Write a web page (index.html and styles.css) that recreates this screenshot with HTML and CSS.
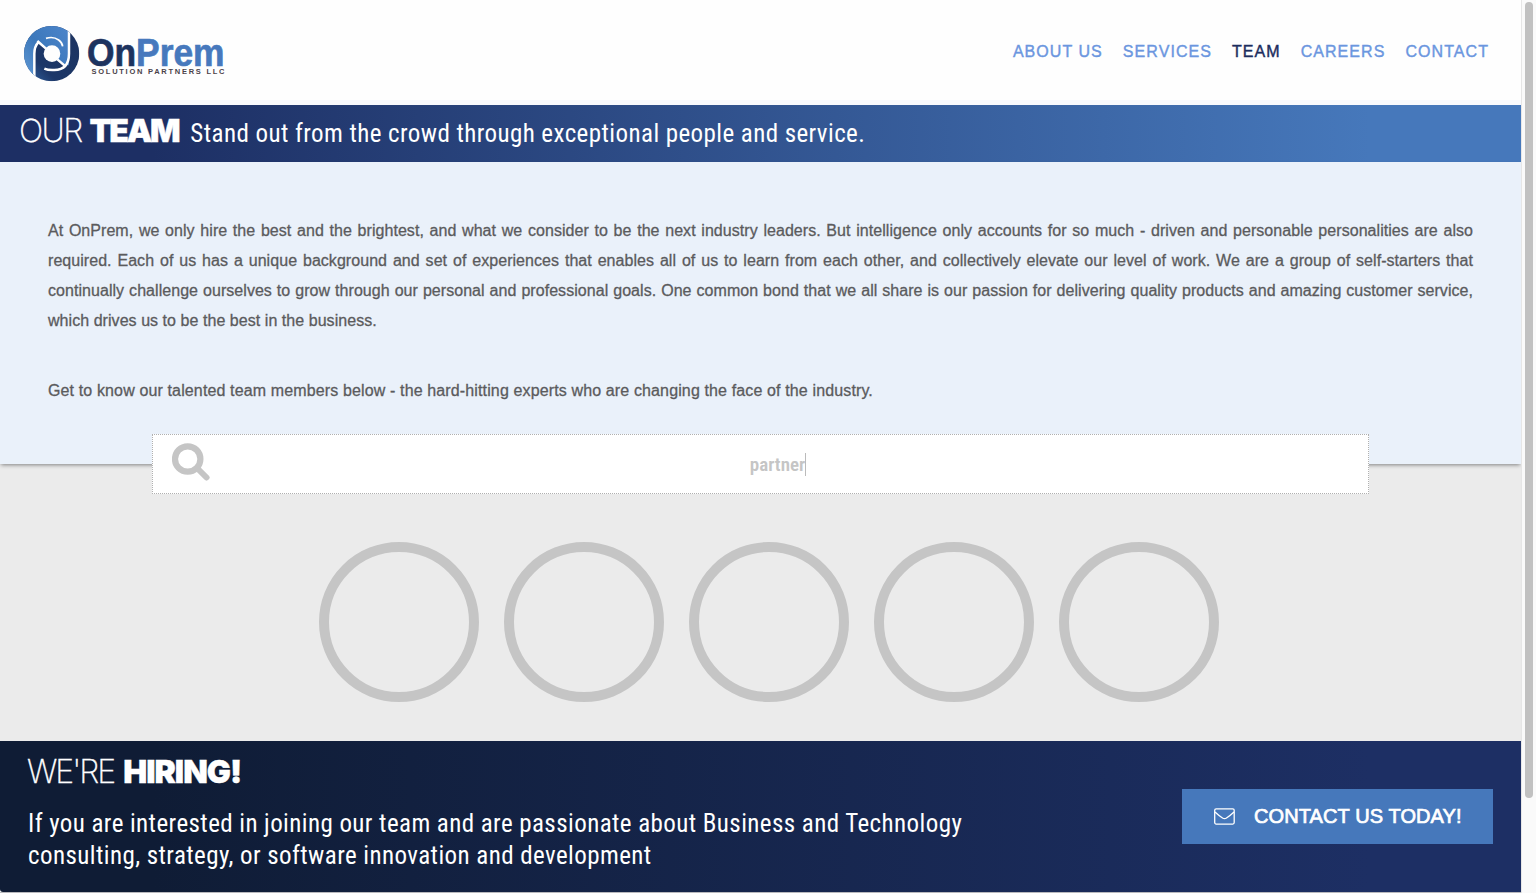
FILE: index.html
```html
<!DOCTYPE html>
<html lang="en">
<head>
<meta charset="utf-8">
<title>OnPrem Solution Partners - Team</title>
<link rel="stylesheet" href="styles.css">
</head>
<body>
<div class="window">
<div class="page">
  <header class="header">
    <svg class="logo" width="220" height="68" viewBox="0 0 220 68" role="img" aria-label="OnPrem Solution Partners LLC">
      <defs>
        <linearGradient id="light" x1="0" y1="1" x2="1" y2="0"><stop offset="0" stop-color="#6ba3dc"/><stop offset=".5" stop-color="#3c78bb"/><stop offset="1" stop-color="#4e86cc"/></linearGradient>
        <linearGradient id="dark" x1="0" y1="1" x2="1" y2="0"><stop offset="0" stop-color="#3467a6"/><stop offset=".3" stop-color="#1c3768"/><stop offset="1" stop-color="#1d335f"/></linearGradient>
        <clipPath id="disc"><circle cx="95" cy="95" r="83"/></clipPath>
      </defs>
      <g transform="scale(.3333)">
        <g clip-path="url(#disc)">
          <rect x="12" y="12" width="166" height="166" fill="url(#dark)"/>
          <path fill="url(#light)" d="M0 0H147V130H132L55 62 43 90V192H0Z"/>
          <g fill="none" stroke="#fefefe" stroke-width="7.500">
            <path d="M43 185V95Q43 73 55 61"/>
            <path d="M147 0V95Q147 143 103 144 84 145 73 140"/>
            <path d="M78 49Q100 42 116 54 127 62 128 73" stroke-width="5"/>
            <path d="M52 57 78 80M112 112 134 131"/>
          </g>
        </g>
        <circle cx="96" cy="95" r="25" fill="#fefefe"/>
      </g>
      <text class="logo-name" x="67" y="43.700" textLength="137.500" lengthAdjust="spacingAndGlyphs"><tspan class="on">On</tspan><tspan class="prem">Prem</tspan></text>
      <text class="logo-sub" x="71.500" y="52" textLength="133">SOLUTION PARTNERS LLC</text>
    </svg>
    <nav class="nav">
      <a>ABOUT US</a><a>SERVICES</a><a class="active">TEAM</a><a>CAREERS</a><a>CONTACT</a>
    </nav>
  </header>
  <section class="banner">
    <h1 class="heading"><span class="thin our">OUR</span> <span class="black team">TEAM</span></h1>
    <p class="condensed tagline">Stand out from the crowd through exceptional people and service.</p>
  </section>
  <section class="intro">
    <p class="lead">At OnPrem, we only hire the best and the brightest, and what we consider to be the next industry leaders. But intelligence only accounts for so much - driven and personable personalities are also required. Each of us has a unique background and set of experiences that enables all of us to learn from each other, and collectively elevate our level of work. We are a group of self-starters that continually challenge ourselves to grow through our personal and professional goals. One common bond that we all share is our passion for delivering quality products and amazing customer service, which drives us to be the best in the business.</p>
    <p>Get to know our talented team members below - the hard-hitting experts who are changing the face of the industry.</p>
  </section>
  <section class="team-section">
    <div class="search">
      <svg class="search-icon" width="38" height="38" viewBox="0 0 38 38"><circle cx="15.700" cy="16" r="12.700" fill="none" stroke="#c5c5c5" stroke-width="6.200"/><path d="M25.500 25.500 34.500 34.500" stroke="#c5c5c5" stroke-width="6" stroke-linecap="round"/></svg>
      <span class="query">partner</span><i class="caret"></i>
    </div>
    <div class="members"><i></i><i></i><i></i><i></i><i></i></div>
  </section>
  <footer class="hiring">
    <div class="pitch">
      <h2 class="heading"><span class="thin were">WE'RE</span> <span class="black hir">HIRING!</span></h2>
      <p class="condensed">If you are interested in joining our team and are passionate about Business and Technology<br>consulting, strategy, or software innovation and development</p>
    </div>
    <a class="button">
      <svg width="21" height="17" viewBox="0 0 21 17" fill="none" stroke="#fff" stroke-width="1.300"><rect x=".7" y=".8" width="19.500" height="15.300" rx="1.500"/><path d="M1 4Q4.500 7.300 8.500 10Q10.500 11.300 12.500 10Q16.500 7.300 20 4"/></svg>
      <span>CONTACT US TODAY!</span>
    </a>
  </footer>
</div>
<div class="scrollbar"><i></i></div>
</div>
</body>
</html>
```
FILE: styles.css
```css
* { box-sizing: border-box; }
body { margin: 0; background: #fff; font-family: "Liberation Sans", Arial, sans-serif; }
h1, h2, p { margin: 0; font-weight: 400; }
.window { display: flex; height: 893px; overflow: hidden; }
.page { width: 1521px; border-bottom: 1px solid #b9b9bd; height: 893px; overflow: hidden; }
.header { height: 105px; border-bottom: 5px solid #f8f9fd; display: flex; justify-content: space-between; padding: 22px 32px 0 20px; background: #fefefe; }
.logo-name { font: 700 38.5px "Liberation Sans", Arial, sans-serif; stroke-width: .7px; }
.on { fill: #1d335f; stroke: #1d335f; }
.prem { fill: #4779bd; stroke: #4779bd; }
.logo-sub { font: 700 7.5px "Liberation Sans", Arial, sans-serif; fill: #4b4349; }
.nav { display: flex; gap: 20px; font-size: 16px; line-height: 20px; letter-spacing: 1.06px; padding-top: 20px; color: #6b96df; -webkit-text-stroke: .4px; }
.active { color: #1c2d5e; }
.banner { height: 57px; padding-left: 19px; display: flex; color: #fff; background: linear-gradient(90deg, #1d2f64 10%, #4678bb 90%); white-space: nowrap; }
.heading { font: 400 32px/52px Inter, sans-serif; display: flex; gap: 9px; }
.thin { font-weight: 200; letter-spacing: -2px; -webkit-text-stroke: .3px; }
.our { letter-spacing: -1.6px; }
.black { font-weight: 900; letter-spacing: -1px; -webkit-text-stroke: .4px; }
.team { letter-spacing: -2.2px; margin-left: -1px; }
.condensed { font: 400 25px/32px Roboto, sans-serif; font-stretch: 75%; letter-spacing: .42px; }
.pitch .condensed { margin: 10px 0 0 1px; }
.tagline { line-height: 57px; margin-left: 12px; }
.intro { height: 302px; padding: 54px 48px 0; background: #eaf1fa; color: #5b5b5d; font-size: 16px; line-height: 30px; letter-spacing: .133px; text-align: justify; box-shadow: 0 2px 4px -1px rgba(0,0,0,.45); position: relative; -webkit-text-stroke: .3px; }
.lead { letter-spacing: .05px; }
.intro p + p { margin-top: 40px; }
.team-section { height: 277px; background: #ebebeb; }
.search { position: relative; top: -30px; z-index: 1; width: 1217px; height: 60px; margin: 0 auto; background: #fff; border: 1px dotted #b0b0b0; display: flex; align-items: center; justify-content: center; color: #c5c5c5; }
.search-icon { position: absolute; left: 19px; top: 8px; }
.query { font: 600 19px/24px Roboto, sans-serif; font-stretch: 75%; margin-left: 35px; padding-top: 1px; }
.caret { width: 1px; height: 23px; background: #bbb; }
.members { display: flex; gap: 25px; margin: 18px 0 0 319px; }
.members i { width: 160px; height: 160px; border: 10px solid #c5c5c5; border-radius: 50%; }
.hiring { height: 151px; padding: 5px 28px 0 27px; display: flex; justify-content: space-between; color: #fff; background: linear-gradient(90deg, #0f1c35 10%, #1d2f64 90%); border-radius: 0 0 0 3px; white-space: nowrap; }
.button { width: 311px; height: 55px; margin-top: 43px; background: #4678bb; display: flex; align-items: center; padding-left: 32px; gap: 19px; font-size: 20px; letter-spacing: .1px; -webkit-text-stroke: .7px; }
.scrollbar { width: 15px; height: 893px; background: #fafafa; border-left: 1px solid #e6e6e6; padding: 2px 0 0 3px; }
.scrollbar i { display: block; width: 8px; height: 796px; border-radius: 4px; background: #c1c1c1; }
```
